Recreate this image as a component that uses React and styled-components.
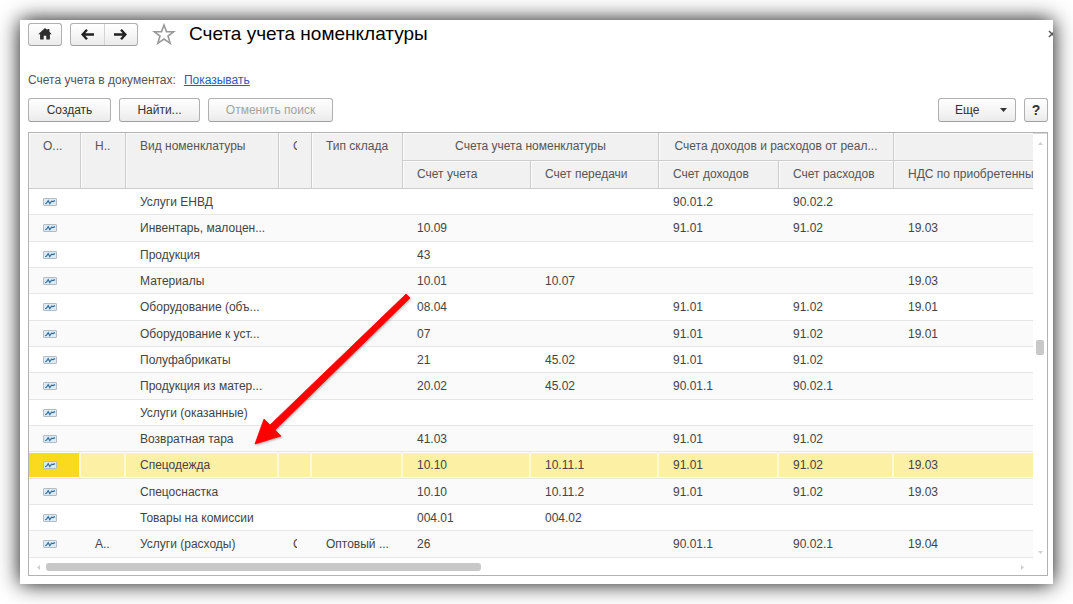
import styled, { createGlobalStyle, css } from "styled-components";

const GlobalStyle = createGlobalStyle`
  * {
    box-sizing: border-box;
  }

  body {
    margin: 0;
    background: #fff;
    color: #444;
    font-family: "Liberation Sans", Arial, sans-serif;
    font-size: 12px;
    line-height: 16px;
  }

  button {
    font: inherit;
    cursor: pointer;
  }
`;

const Page = styled.div`
  min-height: 100vh;
  padding: 20px;
  display: flex;
`;

const Window = styled.main`
  position: relative;
  flex: 1;
  min-width: 0;
  display: flex;
  flex-direction: column;
  padding: 2px 5px 8px 8px;
  background: #fff;
  box-shadow: 0 0 20px rgba(0, 0, 0, 0.95);
`;

const TitleBar = styled.header`
  display: flex;
  align-items: center;
  height: 24px;
`;

const buttonFace = css`
  border: 1px solid #b0b0b0;
  border-bottom-color: #a0a0a0;
  border-radius: 3px;
  background: linear-gradient(#fff, #f6f6f6 50%, #ebebeb);
  color: #333;
`;

const HomeButton = styled.button`
  ${buttonFace}
  display: flex;
  align-items: center;
  justify-content: center;
  width: 34px;
  height: 23px;
  padding: 0;
`;

const NavGroup = styled.div`
  ${buttonFace}
  display: flex;
  width: 68px;
  height: 23px;
  margin-left: 8px;
`;

const NavButton = styled.button`
  flex: 1;
  display: flex;
  align-items: center;
  justify-content: center;
  padding: 0;
  border: none;
  background: none;

  & + & {
    border-left: 1px solid #d4d4d4;
  }
`;

const StarButton = styled.button`
  display: flex;
  margin-left: 14px;
  padding: 0;
  border: none;
  background: none;
`;

const Title = styled.h1`
  flex: 1;
  margin: 0 0 0 13px;
  color: #000;
  font-size: 19px;
  font-weight: normal;
  line-height: 24px;
`;

const CloseButton = styled.button`
  display: flex;
  width: 5px;
  margin-right: -5px;
  padding: 0;
  overflow: hidden;
  border: none;
  background: none;

  svg {
    flex: none;
  }
`;

const Setting = styled.p`
  display: flex;
  gap: 8px;
  margin: 26px 0 10px;
  color: #555;
`;

const SettingLink = styled.a`
  color: #2a5db8;
`;

const Toolbar = styled.div`
  display: flex;
  gap: 8px;
  margin-bottom: 10px;
`;

const Button = styled.button`
  ${buttonFace}
  display: flex;
  align-items: center;
  justify-content: center;
  height: 24px;
  min-width: ${(props) => props.$width}px;
  padding: 0 8px;

  &:disabled {
    color: #a3a3a3;
    cursor: default;
  }
`;

const MoreButton = styled(Button)`
  justify-content: space-between;
  padding: 0 8px 0 16px;
`;

const HelpButton = styled(Button)`
  padding: 0;
  font-size: 14px;
  font-weight: bold;
`;

const Spacer = styled.div`
  flex: 1;
`;

const Grid = styled.section`
  flex: 1;
  display: grid;
  grid-template-columns: minmax(0, 1fr) 14px;
  grid-template-rows: 1fr 16px;
  border: 1px solid #b2b2b2;
  box-shadow: inset 0 1px #d8d8d8;
`;

const TableArea = styled.div`
  overflow: hidden;
`;

const Table = styled.table`
  width: 100%;
  table-layout: fixed;
  border-collapse: separate;
  border-spacing: 0;
`;

const Th = styled.th`
  height: 28px;
  padding: 5px 14px 6px;
  overflow: hidden;
  border-right: 1px solid #cdcdcd;
  border-bottom: 1px solid #cdcdcd;
  background: #f1f1f1;
  box-shadow: inset 1px 1px #fbfbfb;
  color: #555;
  font-weight: normal;
  text-align: ${(props) => (props.$group ? "center" : "left")};
  vertical-align: top;
  white-space: nowrap;

  &:last-child {
    padding-right: 0;
    border-right: none;
  }
`;

const Td = styled.td`
  height: 26px;
  padding: 0 0 0 14px;
  overflow: hidden;
  border-bottom: 1px solid #e6e6e6;
  white-space: nowrap;
`;

const Row = styled.tr`
  &:nth-child(even) {
    background: #fafafa;
  }

  &:nth-child(3n + 2) ${Td} {
    height: 27px;
  }

  ${(props) =>
    props.$selected &&
    css`
      ${Td} {
        background: #fcf0a4;
        box-shadow: inset -2px 0 #fff9da, inset 0 -1px #fff, inset 0 1px #fff;
      }

      ${Td}:first-child {
        background: #fbd91f;
      }

      ${Td}:last-child {
        box-shadow: inset 0 -1px #fff, inset 0 1px #fff;
      }
    `}
`;

const Clip = styled.span`
  display: block;
  width: 4px;
  overflow: hidden;
`;

const RowIcon = styled.svg`
  display: block;
`;

const VScroll = styled.div`
  display: flex;
  flex-direction: column;
  align-items: center;
  padding: 8px 0 4px;
`;

const HScroll = styled.div`
  display: flex;
  align-items: center;
  padding: 0 8px 0 7px;
`;

const VThumb = styled.div`
  width: 8px;
  height: 15px;
  border-radius: 2px;
  background: #c8c8c8;
`;

const HThumb = styled.div`
  width: 44%;
  height: 8px;
  margin-left: 5px;
  border-radius: 3px;
  background: #c8c8c8;
`;

const Track = styled.div`
  flex: ${(props) => props.$size};
`;

const Pointer = styled.svg`
  position: absolute;
  top: 270px;
  left: 230px;
  overflow: visible;
  pointer-events: none;
  filter: drop-shadow(1px 1px 1px rgba(0, 0, 0, 0.3));
`;

const columnWidths = [52, 45, 153, 33, 91, 128, 128, 120, 115];

const rows = [
  { name: "Услуги ЕНВД", income: "90.01.2", expense: "90.02.2" },
  { name: "Инвентарь, малоцен...", account: "10.09", income: "91.01", expense: "91.02", vat: "19.03" },
  { name: "Продукция", account: "43" },
  { name: "Материалы", account: "10.01", transfer: "10.07", vat: "19.03" },
  { name: "Оборудование (объ...", account: "08.04", income: "91.01", expense: "91.02", vat: "19.01" },
  { name: "Оборудование к уст...", account: "07", income: "91.01", expense: "91.02", vat: "19.01" },
  { name: "Полуфабрикаты", account: "21", transfer: "45.02", income: "91.01", expense: "91.02" },
  { name: "Продукция из матер...", account: "20.02", transfer: "45.02", income: "90.01.1", expense: "90.02.1" },
  { name: "Услуги (оказанные)" },
  { name: "Возвратная тара", account: "41.03", income: "91.01", expense: "91.02" },
  { name: "Спецодежда", account: "10.10", transfer: "10.11.1", income: "91.01", expense: "91.02", vat: "19.03", selected: true },
  { name: "Спецоснастка", account: "10.10", transfer: "10.11.2", income: "91.01", expense: "91.02", vat: "19.03" },
  { name: "Товары на комиссии", account: "004.01", transfer: "004.02" },
  { name: "Услуги (расходы)", item: "А..", store: "С", storeType: "Оптовый ...", account: "26", income: "90.01.1", expense: "90.02.1", vat: "19.04" },
];

const RecordIcon = () => (
  <RowIcon width="14" height="8" viewBox="0 0 14 8">
    <rect x="0.5" y="0.5" width="13" height="7" rx="0.5" fill="#dcebf5" stroke="#b3bcc4" />
    <path
      d="M2.2 5.8 3.6 5 5.2 2.6 6.8 5.6 8.6 3.2 10 3.6 12 2.6"
      fill="none"
      stroke="#33709c"
      strokeWidth="1.2"
    />
  </RowIcon>
);

const Chevron = ({ points }) => (
  <svg width="5" height="5" viewBox="0 0 5 5">
    <polygon points={points} fill="#cfcfcf" />
  </svg>
);

const App = () => {
  return (
    <>
      <GlobalStyle />
      <Page>
        <Window>
          <TitleBar>
            <HomeButton aria-label="Начальная страница">
              <svg width="14" height="12" viewBox="0 0 14 12">
                <path d="M7 0 0.2 6.2h1.9v5.4h3.6V7.8h2.6v3.8h3.6V6.2h1.9L11.4 3.8V1H9.4v1.1z" fill="#2e2e2e" />
              </svg>
            </HomeButton>
            <NavGroup>
              <NavButton aria-label="Назад">
                <svg width="13" height="11" viewBox="0 0 13 11">
                  <path d="M6 0.8 1.6 5.5 6 10.2M1.8 5.5H13" fill="none" stroke="#222" strokeWidth="2.4" />
                </svg>
              </NavButton>
              <NavButton aria-label="Вперед">
                <svg width="13" height="11" viewBox="0 0 13 11">
                  <path d="M7 0.8 11.4 5.5 7 10.2M11.2 5.5H0" fill="none" stroke="#222" strokeWidth="2.4" />
                </svg>
              </NavButton>
            </NavGroup>
            <StarButton aria-label="Добавить в избранное">
              <svg width="24" height="22" viewBox="0 0 24 22">
                <path
                  d="M12 2l2.5 6.6 7.2.1-5.7 4.4 2.2 7.2L12 16l-6.2 4.3L8 13.1 2.3 8.7l7.2-.1z"
                  fill="#fff"
                  stroke="#999"
                  strokeWidth="1.6"
                />
              </svg>
            </StarButton>
            <Title>Счета учета номенклатуры</Title>
            <CloseButton aria-label="Закрыть">
              <svg width="8" height="8" viewBox="0 0 8 8">
                <path d="M1 1l6 6M7 1L1 7" stroke="#555" strokeWidth="1.5" />
              </svg>
            </CloseButton>
          </TitleBar>

          <Setting>
            Счета учета в документах: <SettingLink href="#">Показывать</SettingLink>
          </Setting>

          <Toolbar>
            <Button $width={83}>Создать</Button>
            <Button $width={81}>Найти...</Button>
            <Button $width={125} disabled>
              Отменить поиск
            </Button>
            <Spacer />
            <MoreButton $width={78}>
              Еще
              <svg width="7" height="4" viewBox="0 0 7 4">
                <polygon points="0,0 7,0 3.5,4" fill="#333" />
              </svg>
            </MoreButton>
            <HelpButton $width={24}>?</HelpButton>
          </Toolbar>

          <Grid>
            <TableArea>
              <Table>
                <colgroup>
                  {columnWidths.map((width, index) => (
                    <col key={index} style={{ width }} />
                  ))}
                  <col />
                </colgroup>
                <thead>
                  <tr>
                    <Th rowSpan={2}>О...</Th>
                    <Th rowSpan={2}>Н..</Th>
                    <Th rowSpan={2}>Вид номенклатуры</Th>
                    <Th rowSpan={2}>
                      <Clip>С</Clip>
                    </Th>
                    <Th rowSpan={2}>Тип склада</Th>
                    <Th colSpan={2} $group>
                      Счета учета номенклатуры
                    </Th>
                    <Th colSpan={2} $group>
                      Счета доходов и расходов от реал...
                    </Th>
                    <Th />
                  </tr>
                  <tr>
                    <Th>Счет учета</Th>
                    <Th>Счет передачи</Th>
                    <Th>Счет доходов</Th>
                    <Th>Счет расходов</Th>
                    <Th>НДС по приобретенным</Th>
                  </tr>
                </thead>
                <tbody>
                  {rows.map((row) => (
                    <Row key={row.name} $selected={row.selected}>
                      <Td>
                        <RecordIcon />
                      </Td>
                      <Td>{row.item}</Td>
                      <Td>{row.name}</Td>
                      <Td>{row.store && <Clip>{row.store}</Clip>}</Td>
                      <Td>{row.storeType}</Td>
                      <Td>{row.account}</Td>
                      <Td>{row.transfer}</Td>
                      <Td>{row.income}</Td>
                      <Td>{row.expense}</Td>
                      <Td>{row.vat}</Td>
                    </Row>
                  ))}
                </tbody>
              </Table>
            </TableArea>
            <VScroll>
              <Chevron points="0,4 5,4 2.5,1" />
              <Track $size={192} />
              <VThumb />
              <Track $size={193} />
              <Chevron points="0,1 5,1 2.5,4" />
            </VScroll>
            <HScroll>
              <Chevron points="4,0 4,5 1,2.5" />
              <HThumb />
              <Track $size={1} />
              <Chevron points="1,0 1,5 4,2.5" />
            </HScroll>
          </Grid>

          <Pointer width="170" height="160" viewBox="250 290 170 160">
            <polygon
              points="255,444 264,419 270,425 406,294 410,298 275,430 281,436"
              fill="#fe0000"
              stroke="#fe0000"
              strokeWidth="0.8"
            />
          </Pointer>
        </Window>
      </Page>
    </>
  );
};

export default App;
